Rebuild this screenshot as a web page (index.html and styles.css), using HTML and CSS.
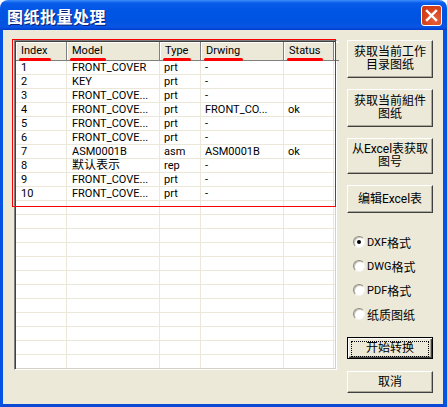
FILE: index.html
```html
<!DOCTYPE html>
<html lang="zh">
<head>
    <meta charset="UTF-8">
    <title>图纸批量处理</title>
    <link rel="stylesheet" href="styles.css">
</head>
<body>
<div class="window">
    <div class="titlebar">
        <span class="title">图纸批量处理</span>
        <span class="close">
            <svg width="13" height="13" viewBox="0 0 13 13">
                <path d="M2 2 L11 11 M11 2 L2 11" stroke="#fff" stroke-width="2.4" stroke-linecap="square"/>
            </svg>
        </span>
    </div>
    <div class="client">
        <div class="list">
            <div class="list-head">
                <div class="hcell"><span class="mark-line">Index</span></div>
                <div class="hcell"><span class="mark-line">Model</span></div>
                <div class="hcell"><span class="mark-line">Type</span></div>
                <div class="hcell"><span class="mark-line">Drwing</span></div>
                <div class="hcell"><span class="mark-line">Status</span></div>
                <div class="hcell hfill"></div>
            </div>
            <div class="list-body" id="list-body">
                <div class="row"><span>1</span><span>FRONT_COVER</span><span>prt</span><span>-</span><span></span><span></span></div>
                <div class="row"><span>2</span><span>KEY</span><span>prt</span><span>-</span><span></span><span></span></div>
                <div class="row"><span>3</span><span>FRONT_COVE...</span><span>prt</span><span>-</span><span></span><span></span></div>
                <div class="row"><span>4</span><span>FRONT_COVE...</span><span>prt</span><span>FRONT_CO...</span><span>ok</span><span></span></div>
                <div class="row"><span>5</span><span>FRONT_COVE...</span><span>prt</span><span>-</span><span></span><span></span></div>
                <div class="row"><span>6</span><span>FRONT_COVE...</span><span>prt</span><span>-</span><span></span><span></span></div>
                <div class="row"><span>7</span><span>ASM0001B</span><span>asm</span><span>ASM0001B</span><span>ok</span><span></span></div>
                <div class="row"><span>8</span><span class="cjk">默认表示</span><span>rep</span><span>-</span><span></span><span></span></div>
                <div class="row"><span>9</span><span>FRONT_COVE...</span><span>prt</span><span>-</span><span></span><span></span></div>
                <div class="row"><span>10</span><span>FRONT_COVE...</span><span>prt</span><span>-</span><span></span><span></span></div>
            </div>
            <div class="mark-box"></div>
        </div>
        <div class="side">
            <button class="btn btn-tall">获取当前工作<br>目录图纸</button>
            <button class="btn btn-tall">获取当前組件<br>图纸</button>
            <button class="btn btn-mid">从<span class="lat">Excel</span>表获取<br>图号</button>
            <button class="btn btn-short">编辑<span class="lat">Excel</span>表</button>
            <div class="radios">
                <label class="radio"><span class="dot checked"></span><span class="lat">DXF</span>格式</label>
                <label class="radio"><span class="dot"></span><span class="lat">DWG</span>格式</label>
                <label class="radio"><span class="dot"></span><span class="lat">PDF</span>格式</label>
                <label class="radio"><span class="dot"></span>纸质图纸</label>
            </div>
            <button class="btn btn-default"><span class="focus">开始转换</span></button>
            <button class="btn btn-cancel">取消</button>
        </div>
    </div>
</div>

<script>
    var body = document.getElementById('list-body');
    for (var i = 0; i < 12; i++) {
        var row = document.createElement('div');
        row.className = 'row';
        for (var j = 0; j < 6; j++) {
            row.appendChild(document.createElement('span'));
        }
        body.appendChild(row);
    }
</script>
</body>
</html>
```

FILE: styles.css
```css
body {
    margin: 0;
    padding: 0;
    background-color: #ffffff;
    font-family: Roboto, "Noto Sans CJK SC", sans-serif;
    font-size: 11px;
    color: #000000;
}

.window {
    width: 447px;
    height: 407px;
    display: flex;
    flex-direction: column;
}

.titlebar {
    height: 30px;
    flex: none;
    display: flex;
    align-items: center;
    justify-content: space-between;
    padding: 0 5px 0 7px;
    border-radius: 8px 8px 0 0;
    background: linear-gradient(to bottom, #3d8dfc 0, #0a5ce9 3px, #0055e5 10px, #0053e0 22px, #0a55e4 27px, #003ccc 30px);
    box-sizing: border-box;
}

.title {
    font-family: "Noto Sans CJK SC", sans-serif;
    font-weight: bold;
    font-size: 16px;
    letter-spacing: 0.5px;
    color: #ffffff;
    text-shadow: 1px 1px 0 #0a1f7a;
    margin-top: 1px;
}

.close {
    width: 21px;
    height: 21px;
    box-sizing: border-box;
    border: 1px solid #ffffff;
    border-radius: 3px;
    background: radial-gradient(circle at 70% 75%, #e4623c 0, #d8431b 55%, #c73510 100%);
    display: flex;
    align-items: center;
    justify-content: center;
}

.client {
    flex: 1;
    display: flex;
    gap: 10px;
    padding: 10px 11px 0 11px;
    background-color: #ece9d8;
    border-left: 3px solid #0553e4;
    border-right: 4px solid #0553e4;
    border-bottom: 4px solid #0a48d6;
}

/* list view */

.list {
    position: relative;
    width: 323px;
    height: 330px;
    flex: none;
    box-sizing: border-box;
    border-top: 1px solid #808080;
    border-left: 1px solid #808080;
    border-right: 1px solid #ffffff;
    border-bottom: 1px solid #ffffff;
    box-shadow: inset 1px 1px 0 #404040, inset -1px -1px 0 #d4d0c8;
    padding: 1px;
    background-color: #ffffff;
}

.list-body {
    height: 307px;
    overflow: hidden;
}

.list-head,
.row {
    display: grid;
    grid-template-columns: 51px 93px 41px 83px 50px 1fr;
}

.hcell {
    position: relative;
    height: 19px;
    box-sizing: border-box;
    padding-left: 5px;
    line-height: 18px;
    background-color: #ece9d8;
    border-right: 1px solid #808080;
    border-bottom: 1px solid #808080;
    box-shadow: inset 1px 1px 0 #ffffff;
}

.hfill {
    border-right: none;
}

.mark-line {
    position: relative;
}

.mark-line::after {
    content: "";
    position: absolute;
    left: -2px;
    right: -3px;
    bottom: -4px;
    height: 3px;
    border-radius: 2px;
    background-color: #ff0000;
}

.row span {
    height: 14px;
    box-sizing: border-box;
    padding-left: 5px;
    line-height: 13px;
    white-space: nowrap;
    overflow: hidden;
    border-right: 1px solid #ebe8d9;
    border-bottom: 1px solid #ebe8d9;
}

.row span:nth-child(n+3) {
    padding-left: 4px;
}

.row .cjk {
    font-size: 12px;
}

.mark-box {
    position: absolute;
    left: -3px;
    top: -2px;
    width: 324px;
    height: 168px;
    box-sizing: border-box;
    border: 1px solid #ff0000;
}

/* buttons and options */

.side {
    width: 86px;
    flex: none;
    display: flex;
    flex-direction: column;
}

.btn {
    width: 86px;
    box-sizing: border-box;
    margin: 0 0 11px 0;
    padding: 0;
    font-family: Roboto, "Noto Sans CJK SC", sans-serif;
    font-size: 12px;
    line-height: 13px;
    color: #000000;
    background-color: #ece9d8;
    border-top: 1px solid #ffffff;
    border-left: 1px solid #ffffff;
    border-right: 1px solid #404040;
    border-bottom: 1px solid #404040;
    box-shadow: inset -1px -1px 0 #aca899;
    border-radius: 0;
}

.btn .lat {
    font-size: 12px;
}

.btn-tall {
    height: 38px;
}

.btn-mid {
    height: 36px;
}

.btn-short {
    height: 28px;
    margin-bottom: 17px;
}

.radios {
    display: flex;
    flex-direction: column;
    margin-bottom: 11px;
}

.radio {
    height: 24px;
    display: flex;
    align-items: center;
    padding-left: 6px;
    font-size: 12px;
}

.radio .lat {
    font-size: 11px;
}

.dot {
    width: 12px;
    height: 12px;
    box-sizing: border-box;
    margin-right: 2px;
    border-radius: 50%;
    background-color: #ffffff;
    border: 1px solid;
    border-color: #8d8a7d #f6f5ee #f6f5ee #8d8a7d;
    box-shadow: inset 1px 1px 0 #c9c6b8;
    display: flex;
    align-items: center;
    justify-content: center;
}

.dot.checked::after {
    content: "";
    width: 4px;
    height: 4px;
    border-radius: 50%;
    background-color: #000000;
}

.btn-default {
    height: 22px;
    margin-bottom: 12px;
    border: 1px solid #000000;
    box-shadow: inset 1px 1px 0 #ffffff, inset -1px -1px 0 #404040, inset -2px -2px 0 #aca899;
    padding: 3px;
}

.focus {
    display: block;
    height: 14px;
    line-height: 13px;
    border: 1px dotted #000000;
}

.btn-cancel {
    height: 22px;
}
```
